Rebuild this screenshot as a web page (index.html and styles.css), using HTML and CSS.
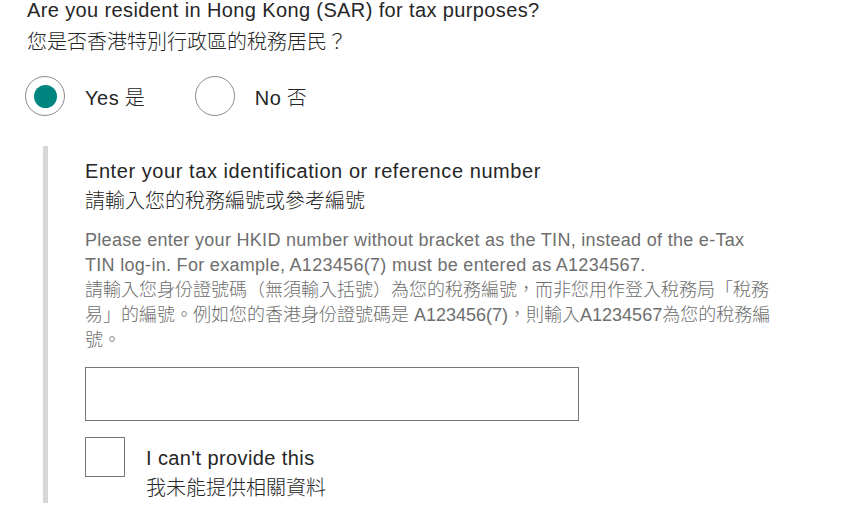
FILE: index.html
```html
<!DOCTYPE html>
<html lang="zh-Hant">
<head>
<meta charset="utf-8">
<title>Tax residency</title>
<link rel="stylesheet" href="styles.css">
</head>
<body>
<div class="page">
  <div class="question">
    <div class="en">Are you resident in Hong Kong (SAR) for tax purposes?</div>
    <div>您是否香港特別行政區的稅務居民？</div>
  </div>
  <div class="radios">
    <label class="radio">
      <span class="circle"><span class="dot"></span></span>
      <span class="radio-label"><span class="en">Yes</span> 是</span>
    </label>
    <label class="radio">
      <span class="circle"></span>
      <span class="radio-label"><span class="en">No</span> 否</span>
    </label>
  </div>
  <div class="section">
    <div class="field-title">
      <div class="en">Enter your tax identification or reference number</div>
      <div>請輸入您的稅務編號或參考編號</div>
    </div>
    <div class="help">
      <div class="en">Please enter your HKID number without bracket as the TIN, instead of the e-Tax TIN log-in. For example, A123456(7) must be entered as A1234567.</div>
      <div>請輸入您身份證號碼（無須輸入括號）為您的稅務編號，而非您用作登入稅務局「稅務易」的編號。例如您的香港身份證號碼是 A123456(7)，則輸入A1234567為您的稅務編號。</div>
    </div>
    <div class="input"></div>
    <label class="check">
      <span class="box"></span>
      <span class="check-label">
        <span class="en">I can't provide this</span>
        <span>我未能提供相關資料</span>
      </span>
    </label>
  </div>
</div>
</body>
</html>
```
FILE: styles.css
```css
html, body {
  margin: 0;
  padding: 0;
  background: #fff;
}
body {
  font-family: "Liberation Sans", Arial, "Noto Sans CJK TC", sans-serif;
  font-weight: 300;
  color: #262626;
}
.page {
  padding-left: 25px;
}
.question {
  margin-top: -6px;
  padding-left: 2px;
  font-size: 20px;
  line-height: 32px;
}
.question .en {
  letter-spacing: 0.38px;
}
.radios {
  display: flex;
  gap: 50px;
  margin-top: 18px;
}
.radio {
  display: flex;
  align-items: center;
  gap: 20px;
}
.circle {
  box-sizing: border-box;
  width: 40px;
  height: 40px;
  border: 1px solid #8c8c8c;
  border-radius: 50%;
  display: flex;
  align-items: center;
  justify-content: center;
}
.dot {
  width: 23px;
  height: 23px;
  border-radius: 50%;
  background: #00847f;
}
.radio-label {
  font-size: 20px;
}
.radio-label .en {
  letter-spacing: 0.5px;
}
.section {
  margin-top: 30px;
  margin-left: 18px;
  border-left: 5px solid #d7d7d7;
  padding-left: 37px;
  padding-top: 10px;
}
.field-title {
  font-size: 20px;
  line-height: 30px;
}
.field-title .en {
  letter-spacing: 0.57px;
}
.help {
  margin-top: 12px;
  width: 692px;
  font-size: 18px;
  line-height: 25px;
  color: #6e6e6e;
}
.help .en {
  letter-spacing: 0.3px;
}
.input {
  box-sizing: border-box;
  margin-top: 14px;
  width: 494px;
  height: 54px;
  border: 1px solid #767676;
}
.check {
  display: flex;
  gap: 21px;
  margin-top: 16px;
}
.box {
  box-sizing: border-box;
  flex: none;
  width: 40px;
  height: 40px;
  border: 1px solid #767676;
}
.check-label {
  display: flex;
  flex-direction: column;
  font-size: 20px;
  line-height: 30px;
  padding-top: 6px;
}
.check-label .en {
  letter-spacing: 0.4px;
}
```
